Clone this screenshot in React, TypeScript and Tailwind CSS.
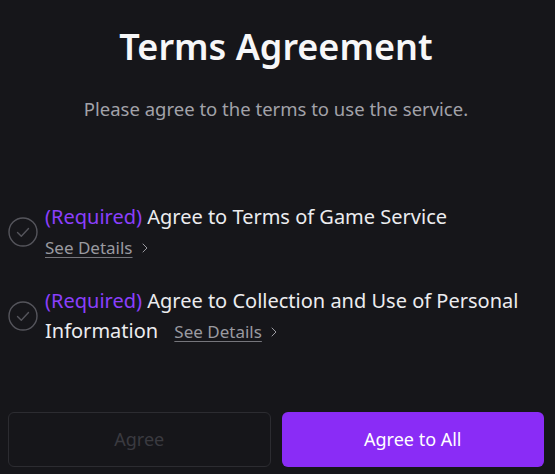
import { ChevronRight } from 'lucide-react';

type Term = {
	label: string;
};

const terms: Term[] = [
	{ label: 'Agree to Terms of Game Service' },
	{ label: 'Agree to Collection and Use of Personal Information' },
];

function CheckCircle() {
	return (
		<svg width="30" height="30" viewBox="0 0 30 30" fill="none" className="shrink-0">
			<circle cx="15" cy="15" r="14" stroke="#55555c" strokeWidth="1.4" />
			<path d="M9.5 15.5l3.8 3.8 7.2-7.8" stroke="#55555c" strokeWidth="1.4" strokeLinecap="round" strokeLinejoin="round" />
		</svg>
	);
}

function TermRow({ term }: { term: Term }) {
	return (
		<div className="flex items-center gap-[7px]">
			<CheckCircle />
			<p className="text-[20px] leading-[30px] text-[#ececef]">
				<span className="text-[#8b3ffd]">(Required)</span> {term.label}
				{/* wide space: collapses away when the link wraps to a new line */}
				<span className="tracking-[11px]"> </span>
				<span className="inline-flex items-center whitespace-nowrap text-[17px] leading-none text-[#9a9aa0]">
					<span className="underline underline-offset-[3px] decoration-[#75757b]">See Details</span>
					<ChevronRight className="ml-1 h-4 w-4" strokeWidth={1.5} />
				</span>
			</p>
		</div>
	);
}

export default function App() {
	return (
		<div
			className="flex h-[474px] w-full flex-col bg-[#16161a] pb-[7px] pl-2 pr-[11px]"
			style={{ fontFamily: '"Noto Sans", sans-serif' }}>
			<h1 className="mt-[25px] text-center text-[36px] font-semibold leading-[44px] text-[#f7f7f8]">
				Terms Agreement
			</h1>
			<p className="mt-[28px] text-center text-[18.5px] leading-[24px] text-[#a2a2a9]">
				Please agree to the terms to use the service.
			</p>

			<div className="mt-[81px] flex flex-col gap-6">
				{terms.map((term) => (
					<TermRow key={term.label} term={term} />
				))}
			</div>

			<div className="mt-auto grid grid-cols-2 gap-[11px]">
				<button className="h-[55px] rounded-md border border-[#2c2c31] text-[18px] text-[#3a3a40]">
					Agree
				</button>
				<button className="h-[55px] rounded-md bg-[#8a2cf6] text-[18px] text-white">
					Agree to All
				</button>
			</div>
		</div>
	);
}
